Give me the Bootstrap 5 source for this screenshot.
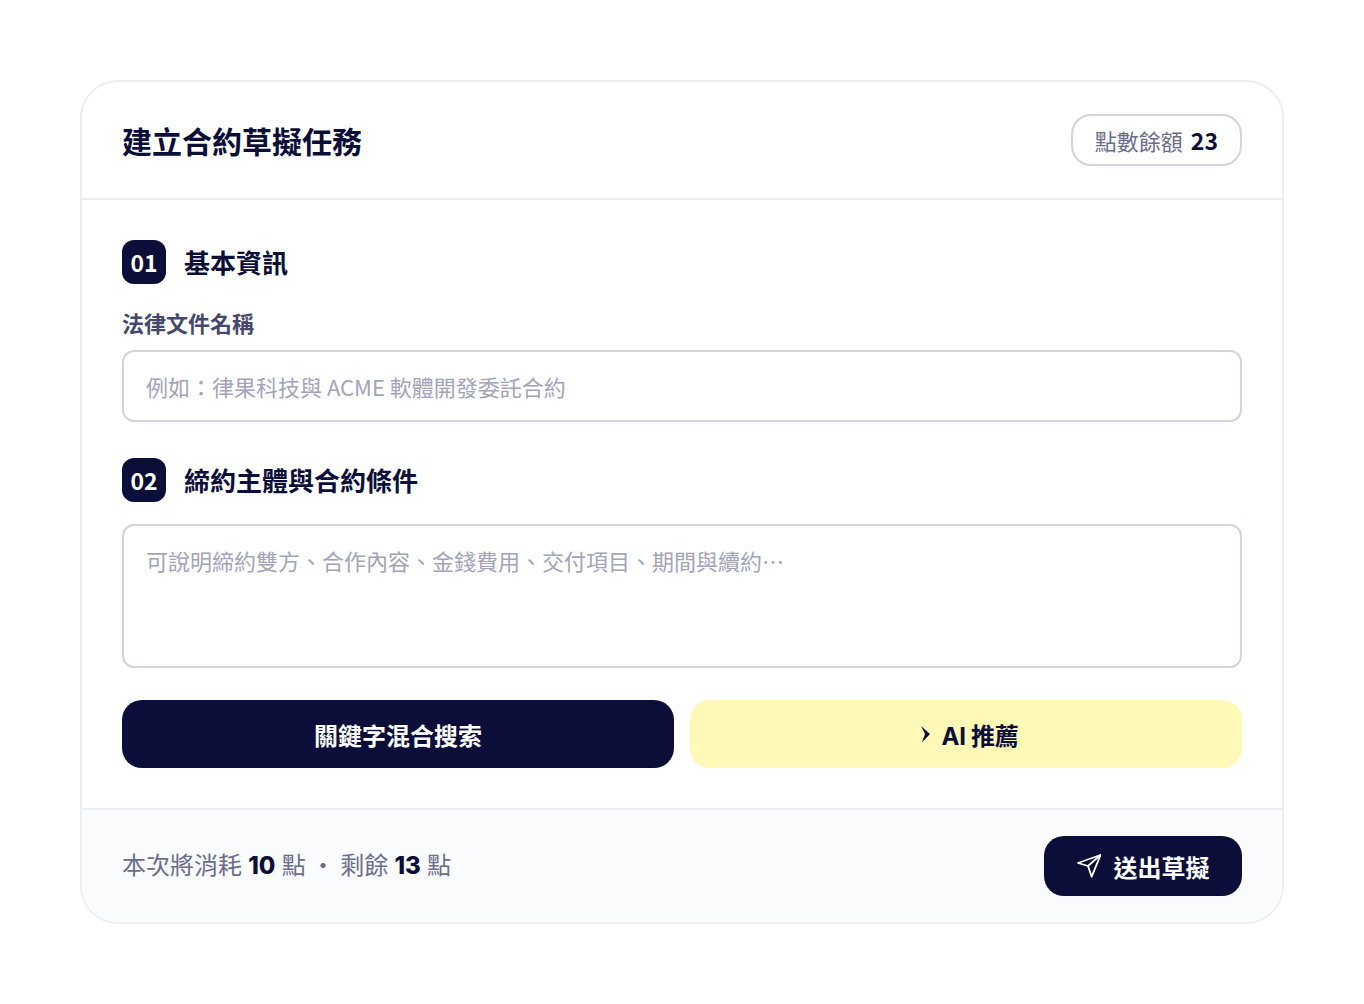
<!DOCTYPE html>
<html lang="zh-Hant">
<head>
<meta charset="utf-8">
<title>建立合約草擬任務</title>
<link href="https://cdn.jsdelivr.net/npm/bootstrap@5.3.0/dist/css/bootstrap.min.css" rel="stylesheet">
<style>
body{background:#fff;font-family:"Inter","Noto Sans CJK TC",sans-serif;color:#0b0e38;}
.page-wrap{padding:80px;}
.task-card{border:2px solid #eeedf3;border-radius:38px;overflow:hidden;background:#fff;}
.task-head{padding:30px 40px;border-bottom:2px solid #eeedf3;height:118px;}
.task-title{font:700 30px/1.4 "Noto Sans CJK TC",sans-serif;margin:0;color:#0b0e38;}
.balance{height:52px;padding:0 22px;border:2px solid #d4d3e0;border-radius:20px;font:400 22px/1 "Noto Sans CJK TC",sans-serif;color:#6b6d8c;}
.balance b{font-weight:700;color:#0b0e38;font-size:23px;}
.task-body{padding:40px;}
.step-no{width:44px;height:44px;border-radius:12px;background:#0b0e38;color:#fff;font:700 23px/1 "Noto Sans CJK TC",sans-serif;}
.step-title{font:700 26px/1.4 "Noto Sans CJK TC",sans-serif;margin:0;color:#0b0e38;}
.step-gap{gap:18px;}
.step-two{margin:36px 0 22px;}
.field-label{font:700 22px/32px "Noto Sans CJK TC",sans-serif;color:#45486b;margin:22px 0 12px;display:block;}
.field-input,.field-area{border:2px solid #d4d3e0;border-radius:12px;font:400 22px/1.45 "Noto Sans CJK TC",sans-serif;padding:0 22px;color:#0b0e38;box-shadow:none;}
.field-input{height:72px;}
.field-area{height:144px;padding-top:19px;padding-bottom:17px;resize:none;}
.field-input::placeholder,.field-area::placeholder{color:#a3a4b8;opacity:1;}
.action-row{margin-top:16px;}
.action-btn{height:68px;border:0;border-radius:20px;font:700 24px/1 "Inter","Noto Sans CJK TC",sans-serif;}
.action-label{padding-top:6px;}
.action-tight{letter-spacing:-.3px;}
.action-dark,.action-dark:hover{background:#0b0e38;color:#fff;}
.action-yellow,.action-yellow:hover{background:#fff9b8;color:#0b0e38;}
.task-foot{background:#fafbfd;border-top:2px solid #eeedf3;height:114px;padding:0 40px;}
.foot-text{font:400 24px/1 "Inter","Noto Sans CJK TC",sans-serif;color:#6b6d8c;word-spacing:-.5px;}
.foot-text b{font-weight:800;color:#0b0e38;}
.dot-sep{margin:0 -1px;}
.send-btn{height:60px;width:198px;border:0;border-radius:20px;background:#0b0e38;color:#fff;font:700 24px/1 "Noto Sans CJK TC",sans-serif;}
.send-btn:hover{background:#0b0e38;color:#fff;}
.send-label{padding-top:2px;margin-left:1px;}
</style>
</head>
<body>
<div class="page-wrap">
  <div class="task-card">
    <div class="task-head d-flex justify-content-between align-items-center">
      <h1 class="task-title">建立合約草擬任務</h1>
      <div class="balance d-flex align-items-center gap-2"><span>點數餘額</span><b>23</b></div>
    </div>
    <div class="task-body">
      <div class="d-flex align-items-center step-gap">
        <div class="step-no d-flex align-items-center justify-content-center">01</div>
        <h2 class="step-title">基本資訊</h2>
      </div>
      <label class="field-label" for="docname">法律文件名稱</label>
      <input id="docname" class="form-control field-input" placeholder="例如：律果科技與 ACME 軟體開發委託合約">
      <div class="d-flex align-items-center step-gap step-two">
        <div class="step-no d-flex align-items-center justify-content-center">02</div>
        <h2 class="step-title">締約主體與合約條件</h2>
      </div>
      <textarea class="form-control field-area" placeholder="可說明締約雙方、合作內容、金錢費用、交付項目、期間與續約⋯"></textarea>
      <div class="row g-3 action-row">
        <div class="col-6"><button class="btn action-btn action-dark w-100 d-flex align-items-center justify-content-center"><span class="action-label">關鍵字混合搜索</span></button></div>
        <div class="col-6"><button class="btn action-btn action-yellow w-100 d-flex align-items-center justify-content-center gap-2">
          <svg width="20" height="20" viewBox="0 0 20 20" fill="#0b0e38"><path d="M7 2l9 8-8 8.500 3-8.500z"/></svg><span class="action-label action-tight">AI 推薦</span></button></div>
      </div>
    </div>
    <div class="task-foot d-flex justify-content-between align-items-center">
      <div class="foot-text">本次將消耗 <b>10</b> 點 <span class="dot-sep">・</span> 剩餘 <b>13</b> 點</div>
      <button class="btn send-btn d-flex align-items-center justify-content-center gap-2">
        <svg class="me-1" width="24" height="24" viewBox="0 0 24 24" fill="none" stroke="#fff" stroke-width="1.800" stroke-linejoin="round"><path d="M23.500 1L1 9l10 3 3.700 10.700z"/><path d="M23.500 1L11 12"/></svg>
        <span class="send-label">送出草擬</span></button>
    </div>
  </div>
</div>
<script src="https://cdn.jsdelivr.net/npm/bootstrap@5.3.0/dist/js/bootstrap.bundle.min.js"></script>
</body>
</html>
